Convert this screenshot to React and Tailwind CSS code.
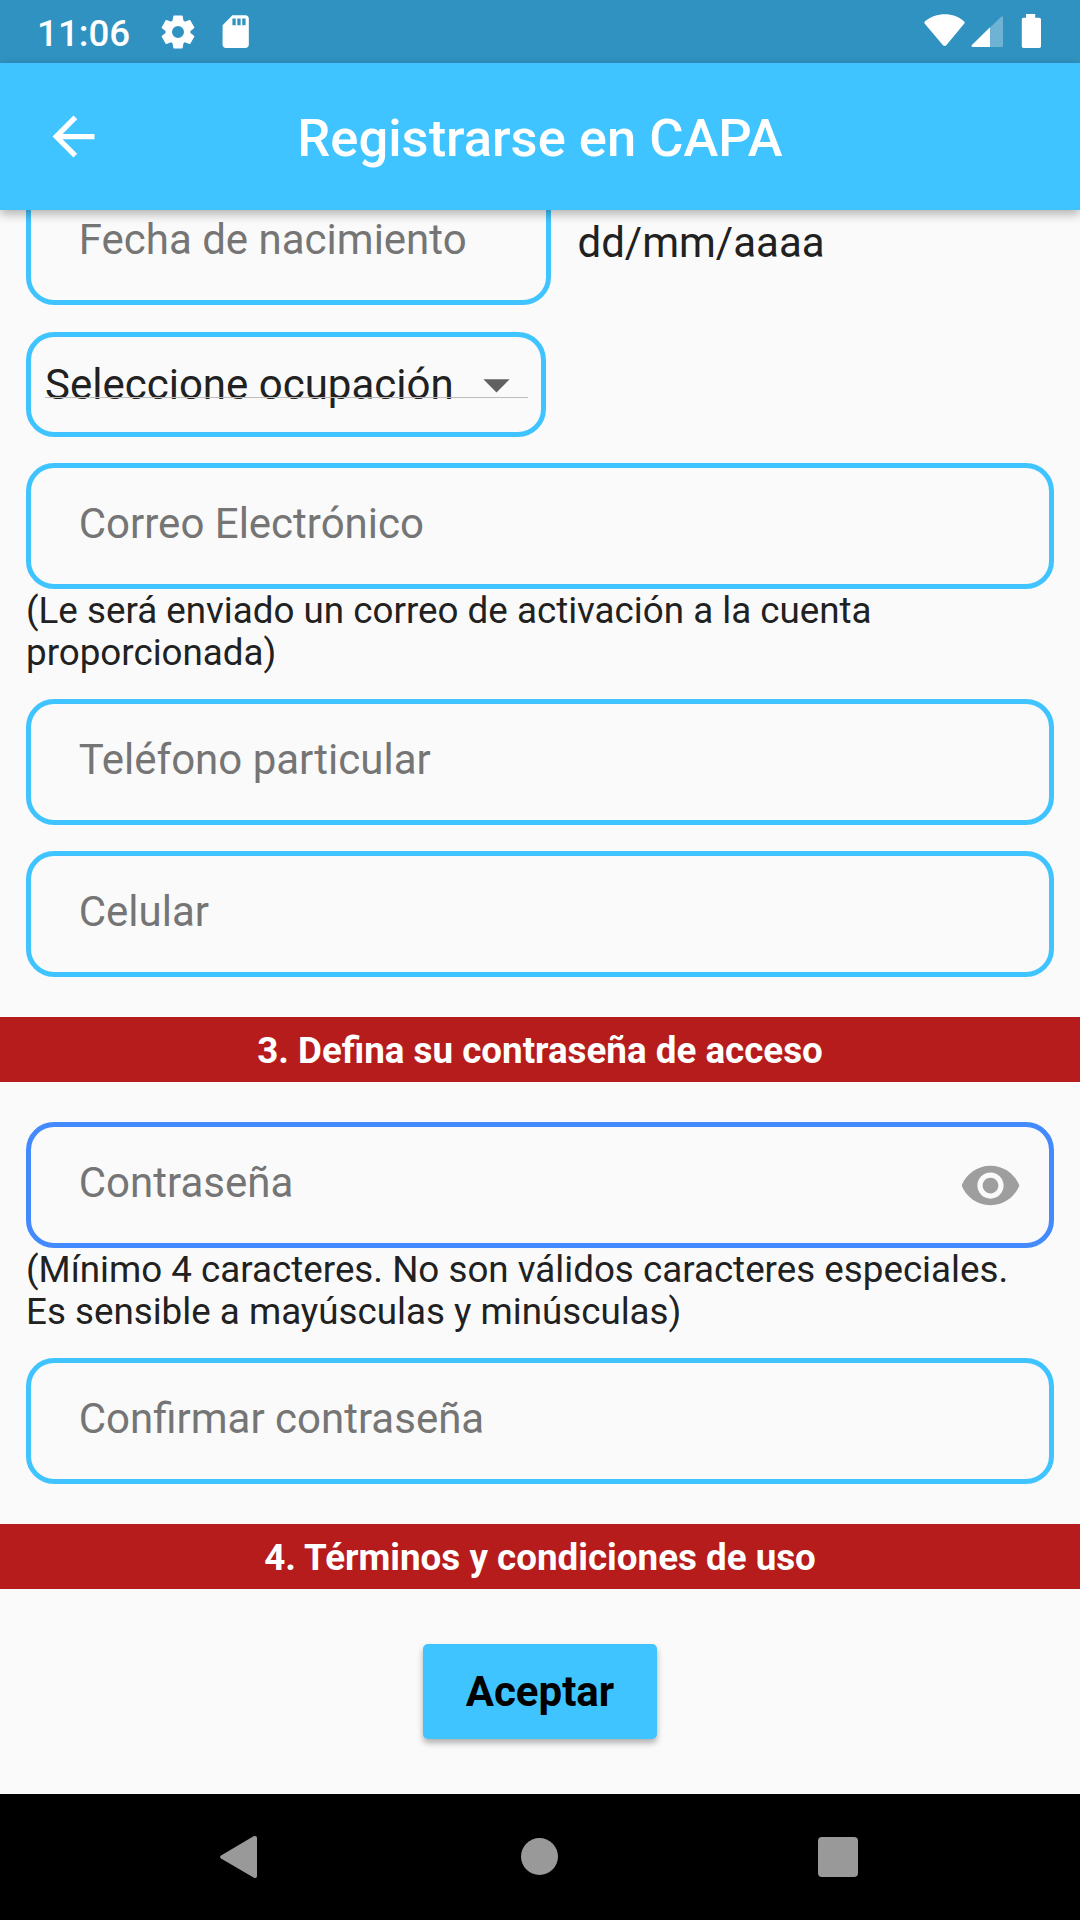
import { MdSdCard, MdArrowBack, MdVisibility, MdArrowDropDown } from "react-icons/md";

const TOOTH = "M-4 -16.500H4Q4.600 -16.500 4.700 -15.800L5.600 -10.500H-5.600L-4.700 -15.800Q-4.600 -16.500 -4 -16.500Z";

function GearIcon({ className }) {
  return (
    <svg className={className} viewBox="-20 -20 40 40" fill="currentColor">
      <circle r="9.200" fill="none" stroke="currentColor" strokeWidth="6.400" />
      {[0, 60, 120, 180, 240, 300].map((angle) => (
        <path key={angle} d={TOOTH} transform={`rotate(${angle})`} />
      ))}
    </svg>
  );
}

function StatusBar() {
  return (
    <div className="flex h-[63px] shrink-0 items-start bg-[#3092c1] text-white">
      <span className="ml-[37px] mt-[12px] w-[120px] text-[36.75px] leading-[43px] font-medium">11:06</span>
      <GearIcon className="mt-[12px] mr-[0.400px] ml-[1px] h-[40px] w-[40px]" />
      <MdSdCard className="mt-[12px] ml-[18.100px] h-[39.4px] w-[39.4px]" />
      <svg className="mt-[14px] mr-[39px] ml-auto h-[34px] w-[118px]" viewBox="0 0 118 34" fill="currentColor">
        <path d="M2 7.2C13 -2.2 31 -2.2 41 7.2Q42.200 8.300 41.300 9.500L23.300 31.300Q21.600 32.900 20 31.300L1.600 9.500Q.9 8.300 2 7.200Z" />
        <path d="M78.200 2.700Q79.900 1.400 80 3.500V31.500Q80 33 78.500 33H50Q47.600 32.600 49 31Z" opacity=".3" />
        <path d="M67 13.300V33H50Q47.600 32.600 49 31Z" />
        <path d="M104 0h9.200v3.700h4q1.800 0 1.800 1.800v26.700q0 1.800-1.800 1.800h-15.600q-1.800 0-1.800-1.800V5.500q0-1.800 1.800-1.800H104Z" transform="translate(-1 0)" />
      </svg>
    </div>
  );
}

function Field({ label, focused, children }) {
  return (
    <div
      className={
        "flex h-[126px] shrink-0 items-start rounded-[28px] border-[5px] pt-[31px] pl-[47.750px] " +
        (focused ? "border-[#448aff]" : "border-[#40c4ff]")
      }
    >
      <span className="text-[42px] leading-[50px] text-[#757575]">{label}</span>
      {children}
    </div>
  );
}

function Section({ children }) {
  return (
    <h2 className="h-[65px] shrink-0 bg-[#b71c1c] pt-[12px] text-center text-[36.750px] leading-[43px] font-bold text-white">
      {children}
    </h2>
  );
}

export default function App() {
  return (
    <div className="flex h-[1920px] w-[1080px] flex-col overflow-hidden bg-[#fafafa] font-['Roboto',sans-serif] text-[#212121]">
      <StatusBar />
      <header className="relative z-10 flex h-[147px] shrink-0 items-center bg-[#40c4ff] text-white shadow-[0_4px_10px_rgba(0,0,0,0.3)]">
        <MdArrowBack className="ml-[42px] h-[63px] w-[63px]" />
        <h1 className="mt-[2px] mr-[105px] flex-1 text-center text-[52.5px] leading-[62px] font-medium whitespace-nowrap">
          Registrarse en CAPA
        </h1>
      </header>

      <main className="flex h-[1584px] shrink-0 flex-col overflow-hidden">
        <div className="mx-[26px] -mt-[31px] flex shrink-0">
          <div className="w-[525px]">
            <Field label="Fecha de nacimiento" />
          </div>
          <span className="mt-[39px] ml-[26.500px] text-[42px] leading-[50px]">dd/mm/aaaa</span>
        </div>

        <div className="mt-[27px] ml-[26px] h-[105px] w-[520px] shrink-0 rounded-[28px] border-[5px] border-[#40c4ff] pr-[13px] pl-[14px] pt-[14px]">
          <div className="relative flex h-[47px] items-start">
            <span className="mt-[9px] text-[42px] leading-[50px] whitespace-nowrap">Seleccione ocupación</span>
            <MdArrowDropDown className="absolute top-[2px] right-0 h-[63px] w-[63px] text-[#616161]" />
            <div className="absolute bottom-0 left-0 h-px w-full bg-[#bdbdbd]" />
          </div>
        </div>

        <div className="mx-[26px] mt-[26px] flex shrink-0 flex-col">
          <Field label="Correo Electrónico" />
          <p className="mt-px mb-[25px] text-[36.750px] leading-[42px]">
            (Le será enviado un correo de activación a la cuenta proporcionada)
          </p>
          <Field label="Teléfono particular" />
          <div className="mt-[26px] flex flex-col">
            <Field label="Celular" />
          </div>
        </div>

        <div className="mt-[40px] shrink-0">
          <Section>3. Defina su contraseña de acceso</Section>
        </div>

        <div className="mx-[26px] mt-[40px] flex shrink-0 flex-col">
          <Field label="Contraseña" focused>
            <MdVisibility className="-mt-[4px] mr-[27px] ml-auto h-[63px] w-[63px] text-[#9e9e9e]" />
          </Field>
          <p className="mt-px mb-[25px] text-[36.750px] leading-[42px]">
            (Mínimo 4 caracteres. No son válidos caracteres especiales. Es sensible a mayúsculas y minúsculas)
          </p>
          <Field label="Confirmar contraseña" />
        </div>

        <div className="mt-[40px] shrink-0">
          <Section>4. Términos y condiciones de uso</Section>
        </div>

        <button className="mx-auto mt-[55px] h-[95px] w-[234px] shrink-0 rounded-[5px] bg-[#40c4ff] text-[42px] leading-[50px] font-bold text-black shadow-[0_4px_6px_rgba(0,0,0,0.3)]">
          Aceptar
        </button>
      </main>

      <nav className="flex h-[126px] shrink-0 items-center bg-black pb-px pl-[219px] text-[#999999]">
        <svg className="h-[44px] w-[39px]" viewBox="0 0 39 44" fill="currentColor">
          <path d="M2 20.500 34.500 1.300Q38 0 38 3V41Q38 44 34.500 42.500L2 23.500Q.2 22 2 20.500Z" />
        </svg>
        <div className="ml-[263px] h-[37px] w-[37px] rounded-full bg-[#999999]" />
        <div className="ml-[260px] h-[40px] w-[40px] rounded-[4px] bg-[#999999]" />
      </nav>
    </div>
  );
}
